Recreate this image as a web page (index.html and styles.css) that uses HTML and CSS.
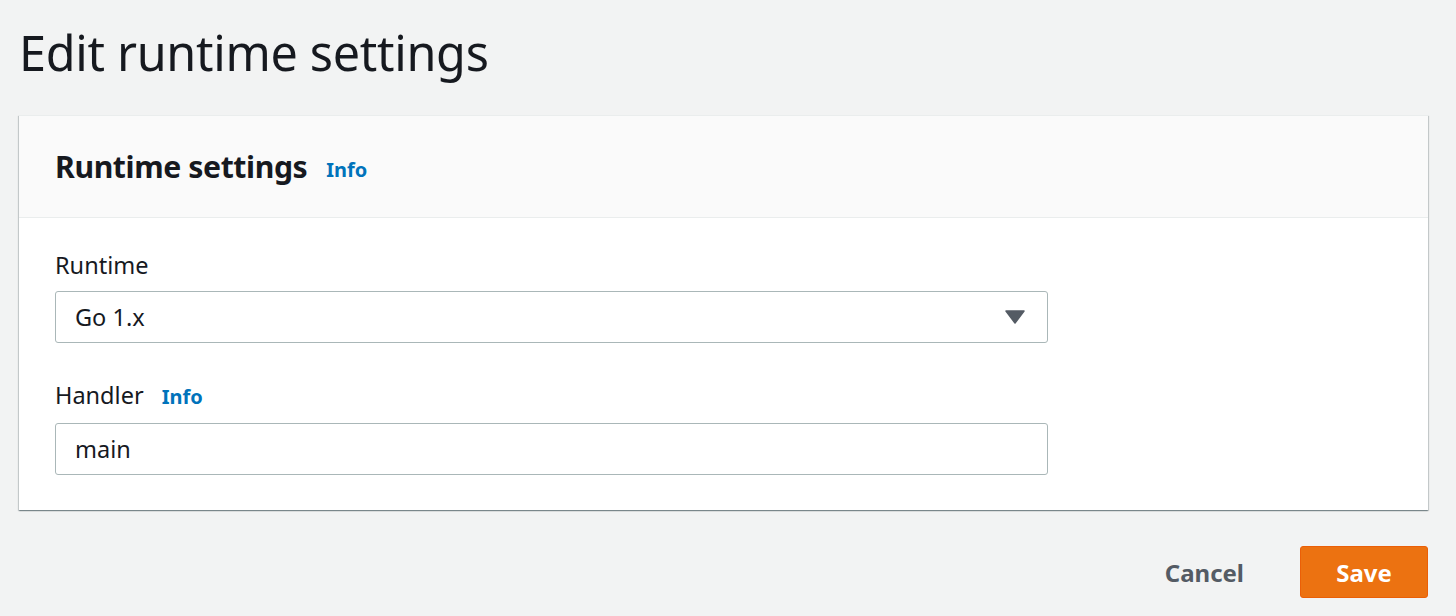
FILE: index.html
```html
<!DOCTYPE html>
<html>
<head>
<meta charset="utf-8">
<link rel="stylesheet" href="styles.css">
</head>
<body>
<div class="page">
  <h1 class="title">Edit runtime settings</h1>
  <div class="card">
    <div class="card-header">
      <h2 class="card-title">Runtime settings</h2>
      <a class="info" href="#">Info</a>
    </div>
    <div class="card-body">
      <div class="field">
        <div class="label">Runtime</div>
        <div class="control select">
          <span>Go 1.x</span>
          <svg class="caret" width="20" height="14" viewBox="0 0 20 14"><path d="M1 1 H19 L10 13 Z" fill="#545b64" stroke="#545b64" stroke-width="1.5" stroke-linejoin="round"/></svg>
        </div>
      </div>
      <div class="field">
        <div class="label">Handler <a class="info small" href="#">Info</a></div>
        <div class="control input"><span>main</span></div>
      </div>
    </div>
  </div>
  <div class="actions">
    <button class="btn-link">Cancel</button>
    <button class="btn-primary">Save</button>
  </div>
</div>
</body>
</html>
```
FILE: styles.css
```css
html, body {
  margin: 0;
  padding: 0;
  background: #f2f3f3;
}
body {
  font-family: "Noto Sans", "Open Sans", sans-serif;
  color: #16191f;
}
.page {
  padding: 0 28px 0 19px;
}
.title {
  margin: 0;
  padding-top: 23px;
  height: 115px;
  box-sizing: border-box;
  font-size: 48.5px;
  line-height: 58px;
  font-weight: 400;
  letter-spacing: -0.3px;
  color: #16191f;
}
.card {
  background: #fff;
  border-top: 1px solid #eaeded;
  box-shadow: 0 1px 1px 0 rgba(0,28,36,.3), 1px 1px 1px 0 rgba(0,28,36,.15), -1px 1px 1px 0 rgba(0,28,36,.15);
}
.card-header {
  height: 102px;
  box-sizing: border-box;
  background: #fafafa;
  border-bottom: 1px solid #eaeded;
  display: flex;
  align-items: center;
  padding: 0 36px;
  gap: 19px;
}
.card-title {
  margin: 0;
  font-size: 30.2px;
  font-weight: 700;
  letter-spacing: -0.4px;
  color: #16191f;
}
.info {
  color: #0073bb;
  font-weight: 700;
  font-size: 20px;
  text-decoration: none;
  padding-top: 6px;
}
.info.small {
  margin-left: 12px;
  padding-top: 0;
}
.card-body {
  padding: 32px 36px 35px 36px;
  display: flex;
  flex-direction: column;
  gap: 37px;
}
.field {
  width: 993px;
}
.label {
  font-size: 23.5px;
  line-height: 30px;
  margin-bottom: 11px;
  color: #16191f;
}
.control {
  height: 52px;
  box-sizing: border-box;
  border: 1px solid #aab7b8;
  border-radius: 3px;
  display: flex;
  align-items: center;
  padding: 0 22px 0 19px;
  font-size: 23.5px;
  color: #16191f;
  background: #fff;
}
.select {
  justify-content: space-between;
}
.caret {
  display: block;
}
.actions {
  display: flex;
  justify-content: flex-end;
  align-items: center;
  margin-top: 36px;
  gap: 56px;
}
.btn-link {
  background: none;
  border: none;
  font-family: inherit;
  font-size: 24px;
  font-weight: 700;
  color: #545b64;
  padding: 0;
}
.btn-primary {
  width: 128px;
  height: 52px;
  background: #ec7211;
  border: 1px solid #eb5f07;
  border-radius: 3px;
  color: #fff;
  font-family: inherit;
  font-size: 24px;
  font-weight: 700;
}
```
